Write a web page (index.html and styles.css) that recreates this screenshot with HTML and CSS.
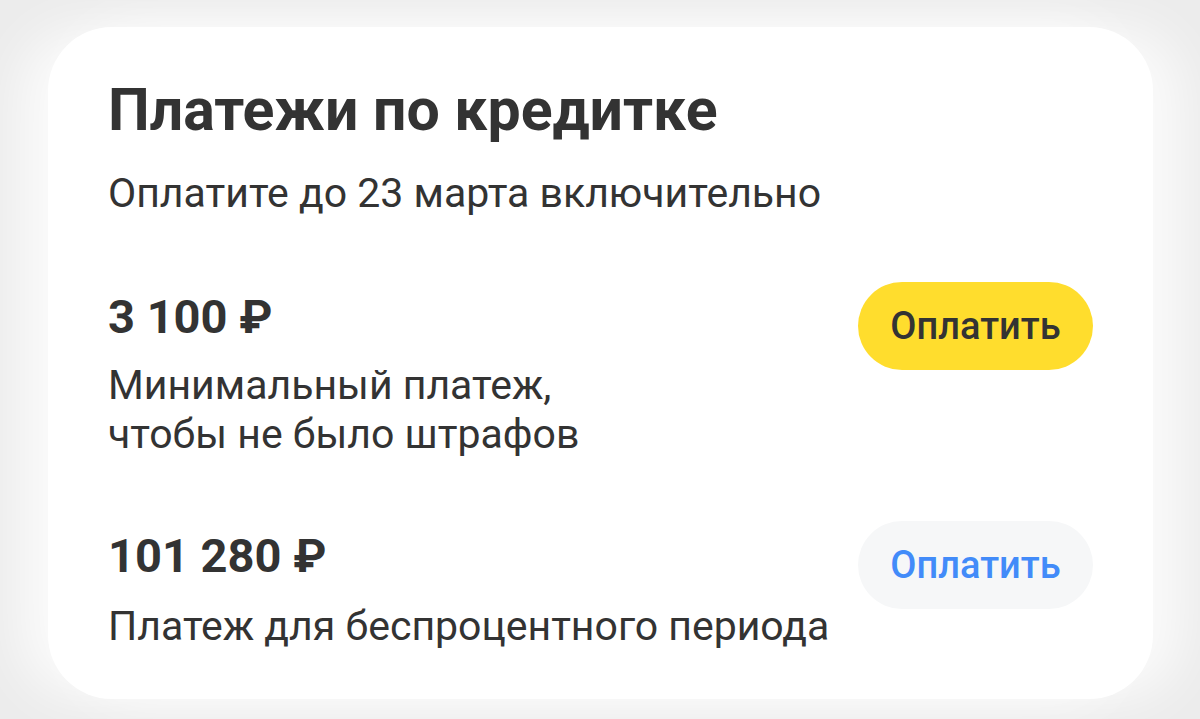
FILE: index.html
```html
<!DOCTYPE html>
<html lang="ru">
<head>
<meta charset="utf-8">
<title>Платежи по кредитке</title>
<link rel="stylesheet" href="styles.css">
</head>
<body>
<div class="card">
  <h1 class="title">Платежи по кредитке</h1>
  <p class="subtitle">Оплатите до 23 марта включительно</p>
  <div class="row first">
    <div class="info">
      <div class="amount">3 100 ₽</div>
      <div class="desc">Минимальный платеж,<br>чтобы не было штрафов</div>
    </div>
    <button class="btn btn-primary">Оплатить</button>
  </div>
  <div class="row second">
    <div class="info">
      <div class="amount">101 280 ₽</div>
      <div class="desc">Платеж для беспроцентного периода</div>
    </div>
    <button class="btn btn-secondary">Оплатить</button>
  </div>
</div>
</body>
</html>
```

FILE: styles.css
```css
html, body {
  margin: 0;
  padding: 0;
}
body {
  width: 1200px;
  height: 719px;
  overflow: hidden;
  background: #ececec;
  font-family: Roboto, "Noto Sans", sans-serif;
  color: #333333;
}
.card {
  box-sizing: border-box;
  margin: 27px 47px 0 48px;
  height: 672px;
  background: #ffffff;
  border-radius: 64px;
  padding: 49px 60px 0 60px;
  box-shadow: -30px 0 50px rgba(255,255,255,0.75), 30px 0 50px rgba(255,255,255,0.75);
}
.title {
  margin: 0;
  font-size: 59px;
  line-height: 68px;
  font-weight: 700;
}
.subtitle {
  margin: 25px 0 0 0;
  font-size: 41px;
  line-height: 48px;
  font-weight: 400;
}
.row {
  display: flex;
  justify-content: space-between;
  align-items: flex-start;
}
.row.first {
  margin-top: 73px;
}
.row.second {
  margin-top: 70px;
}
.amount {
  font-size: 47px;
  line-height: 54px;
  font-weight: 700;
}
.desc {
  margin-top: 17px;
  font-size: 41px;
  line-height: 49px;
}
.second .desc {
  margin-top: 19px;
}
.btn {
  margin-top: -8px;
  width: 235px;
  height: 88px;
  border: none;
  border-radius: 44px;
  font-family: Roboto, "Noto Sans", sans-serif;
  font-size: 38px;
  font-weight: 500;
  padding: 0;
}
.btn-primary {
  background: #ffdd2d;
  color: #333333;
}
.btn-secondary {
  background: #f6f7f8;
  color: #428bf9;
}
```
